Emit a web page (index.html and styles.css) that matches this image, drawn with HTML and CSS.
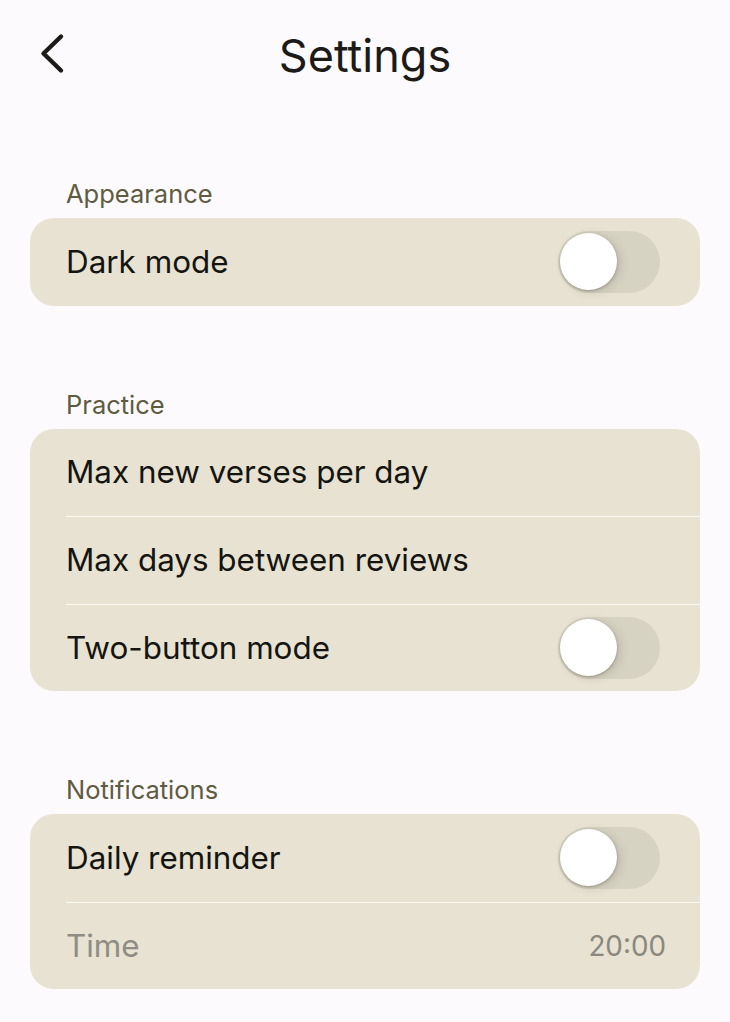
FILE: index.html
```html
<!DOCTYPE html>
<html>
<head>
<meta charset="utf-8">
<link rel="stylesheet" href="styles.css">
</head>
<body>
<div class="screen">
  <header class="header">
    <button class="back" aria-label="Back">
      <svg width="28" height="42" viewBox="0 0 28 42"><path d="M23 3.5 L5.5 20.5 L23 37.5" fill="none" stroke="#1c1b17" stroke-width="4.4" stroke-linecap="round" stroke-linejoin="round"/></svg>
    </button>
    <h1 class="title">Settings</h1>
  </header>
  <main class="sections">
    <section class="section">
      <div class="label">Appearance</div>
      <div class="card">
        <div class="row"><span class="text">Dark mode</span><span class="switch"><span class="thumb"></span></span></div>
      </div>
    </section>
    <section class="section">
      <div class="label">Practice</div>
      <div class="card">
        <div class="row"><span class="text">Max new verses per day</span></div>
        <div class="row"><span class="text">Max days between reviews</span></div>
        <div class="row"><span class="text">Two-button mode</span><span class="switch"><span class="thumb"></span></span></div>
      </div>
    </section>
    <section class="section">
      <div class="label">Notifications</div>
      <div class="card">
        <div class="row"><span class="text">Daily reminder</span><span class="switch"><span class="thumb"></span></span></div>
        <div class="row disabled"><span class="text">Time</span><span class="value">20:00</span></div>
      </div>
    </section>
  </main>
</div>
</body>
</html>
```
FILE: styles.css
```css
html, body {
  margin: 0;
  padding: 0;
  background: #fdfafd;
}
body {
  font-family: Inter, "Noto Sans", sans-serif;
  color: #141410;
}
.screen {
  width: 730px;
}
.header {
  height: 110px;
  display: flex;
  align-items: center;
  justify-content: center;
  position: relative;
}
.back {
  position: absolute;
  left: 38px;
  top: 33px;
  padding: 0;
  border: 0;
  background: none;
  display: flex;
}
.title {
  margin: 0;
  font-size: 45px;
  font-weight: 400;
  color: #1c1b17;
  letter-spacing: 0;
}
.sections {
  display: flex;
  flex-direction: column;
  gap: 83px;
  padding: 68px 30px 0 30px;
}
.section {
  display: flex;
  flex-direction: column;
  gap: 8px;
}
.label {
  padding-left: 36px;
  font-size: 25.5px;
  line-height: 32px;
  color: #5e5c40;
}
.card {
  background: #e7e2d2;
  border-radius: 24px;
  overflow: hidden;
}
.row {
  height: 87.5px;
  margin-left: 36px;
  padding-right: 40px;
  display: flex;
  align-items: center;
  justify-content: space-between;
  border-top: 1px solid #faf8f1;
  box-sizing: border-box;
}
.row:first-child {
  border-top: 0;
}
.text {
  font-size: 31.4px;
}
.disabled .text {
  color: #8f8d83;
}
.value {
  font-size: 27.8px;
  color: #8a887e;
  margin-right: -6px;
}
.switch {
  width: 102px;
  height: 62px;
  border-radius: 31px;
  background: #d7d3c3;
  display: flex;
  align-items: center;
  padding-left: 2px;
  box-sizing: border-box;
}
.thumb {
  width: 57px;
  height: 57px;
  border-radius: 50%;
  background: #ffffff;
  box-shadow: 0 1px 3px rgba(60, 55, 40, 0.35), 4px 2px 10px rgba(60, 55, 40, 0.15);
}
```
